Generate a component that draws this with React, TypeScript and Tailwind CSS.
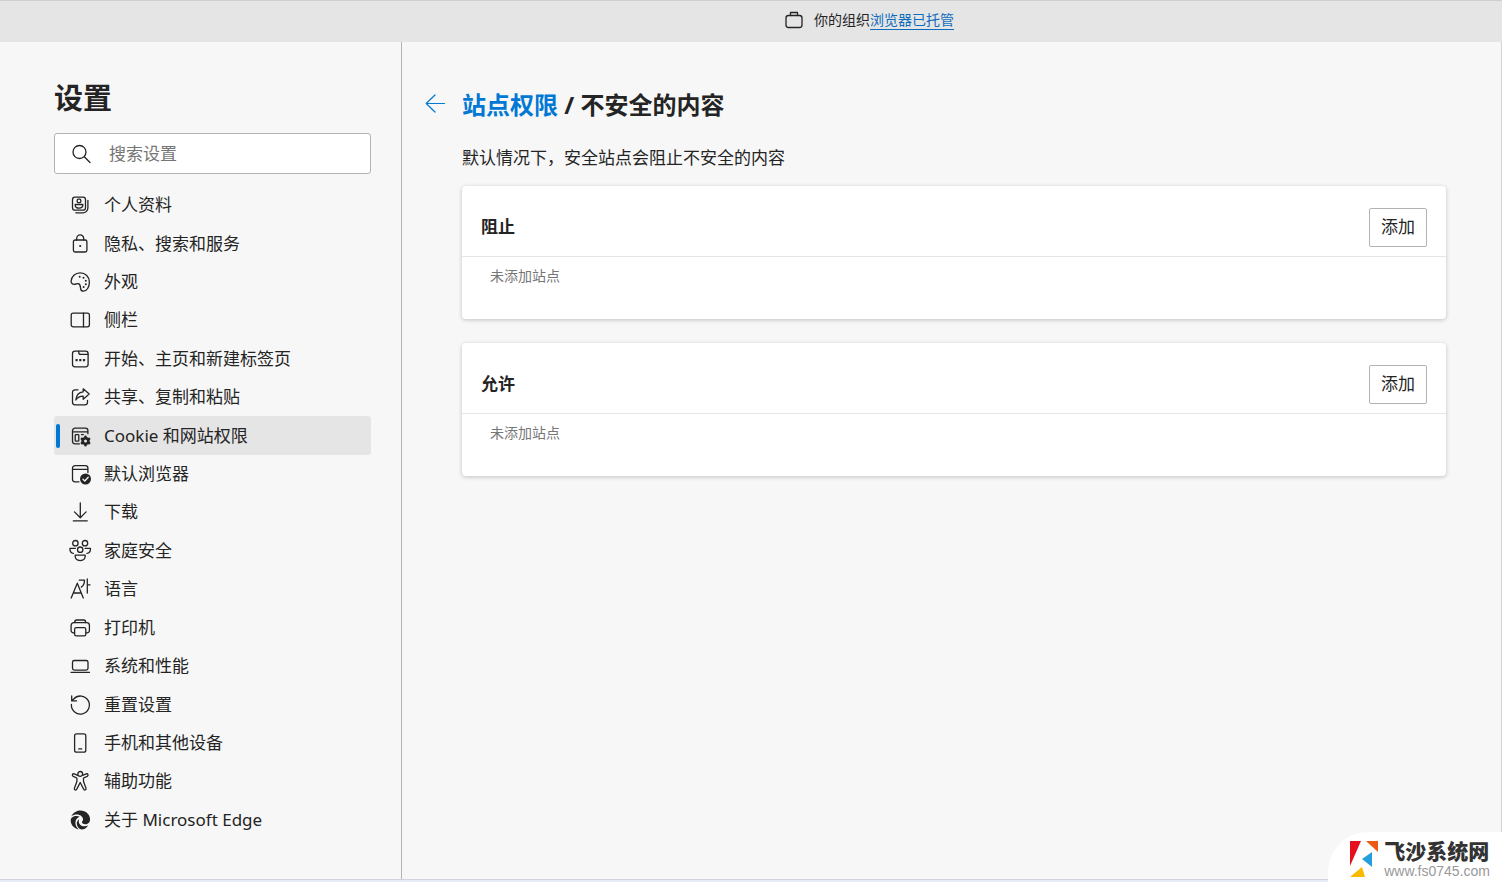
import type { ReactNode } from "react";

type IconProps = { children: ReactNode };

function Icon({ children }: IconProps) {
  return (
    <svg
      viewBox="0 0 24 24"
      className="w-6 h-6 shrink-0"
      fill="none"
      stroke="currentColor"
      strokeWidth="1.3"
      strokeLinecap="round"
      strokeLinejoin="round"
      aria-hidden="true"
    >
      {children}
    </svg>
  );
}

const navItems: { label: string; icon: ReactNode; active?: boolean }[] = [
  {
    label: "个人资料",
    icon: (
      <>
        <rect x="4.5" y="4.2" width="13" height="13" rx="2.5" />
        <rect x="9.2" y="6.2" width="3.6" height="3.4" rx="1" />
        <path d="M7.2 11.5h7.600v.8c0 1.800-1.600 2.800-3.800 2.800s-3.800-1-3.800-2.800z" />
        <path d="M19.900 7.500v7.300a5 5 0 0 1-5 5H7.800" />
      </>
    ),
  },
  {
    label: "隐私、搜索和服务",
    icon: (
      <>
        <rect x="5.400" y="8" width="13.500" height="12" rx="1.700" />
        <path d="M8.700 8V6.400a3.500 3.500 0 0 1 7 0V8" />
        <circle cx="12.200" cy="14" r="1.100" fill="currentColor" stroke="none" />
      </>
    ),
  },
  {
    label: "外观",
    icon: (
      <>
        <path d="M3.100 11.300C3.300 6.300 7.300 2.800 12.200 2.800c5.200 0 9.200 4 9.200 9.200 0 5-2.600 9.200-5.900 9.200-2 0-2.900-1.500-3-3.300-.1-2.200-.6-3.800-2.100-4.300-1.300-.4-2.400.8-4 .8-2 0-3.400-1.200-3.300-3.100z" />
        <g fill="currentColor" stroke="none">
          <circle cx="11.700" cy="6.700" r="1" />
          <circle cx="15.500" cy="7.800" r="1" />
          <circle cx="17.800" cy="10.800" r="1" />
          <circle cx="17.800" cy="14.300" r="1" />
          <circle cx="15.600" cy="17" r="1" />
        </g>
      </>
    ),
  },
  {
    label: "侧栏",
    icon: (
      <>
        <rect x="3.200" y="5.200" width="18.200" height="13.600" rx="2" />
        <path d="M15.500 5.200v13.600" />
      </>
    ),
  },
  {
    label: "开始、主页和新建标签页",
    icon: (
      <>
        <rect x="4.500" y="4.200" width="15.600" height="15.600" rx="2.500" />
        <path d="M10.800 4.200v1.200c0 1.200.8 2 2 2h7.200" />
        <g fill="currentColor" stroke="none">
          <rect x="7.500" y="12" width="2.200" height="2.200" rx=".5" />
          <rect x="11.200" y="12" width="2.200" height="2.200" rx=".5" />
          <rect x="14.900" y="12" width="2.200" height="2.200" rx=".5" />
        </g>
      </>
    ),
  },
  {
    label: "共享、复制和粘贴",
    icon: (
      <>
        <path d="M10 4.800H7a2.500 2.500 0 0 0-2.500 2.500v10A2.500 2.500 0 0 0 7 19.800h10a2.500 2.500 0 0 0 2.500-2.500v-1.800" />
        <path d="M15.200 3.800l6 5.200-6 5.200v-3c-3.400 0-5.600 1-7.400 3.800.4-4.600 2.700-7.700 7.400-8.200z" />
      </>
    ),
  },
  {
    label: "Cookie 和网站权限",
    active: true,
    icon: (
      <>
        <path d="M11.500 19.800H7a2.500 2.500 0 0 1-2.500-2.500V6.700A2.500 2.500 0 0 1 7 4.200h10.400a2.500 2.500 0 0 1 2.500 2.500v3M4.500 7.800h15.400" />
        <rect x="7.200" y="10.600" width="3.600" height="6.600" rx=".8" />
        <path d="M13.500 10.600h1.800" />
        <circle cx="17.500" cy="17" r="2.800" strokeWidth="2.600" />
        <path
          d="M17.500 12.800v.7M17.500 20.500v.7M13.900 14.900l.6.400M20.500 18.700l.6.400M13.900 19.100l.6-.4M20.500 15.300l.6-.4"
          strokeWidth="2.600"
        />
      </>
    ),
  },
  {
    label: "默认浏览器",
    icon: (
      <>
        <path d="M11 19.800H7a2.500 2.500 0 0 1-2.500-2.500V6.200A2.500 2.500 0 0 1 7 3.700h10.400a2.500 2.500 0 0 1 2.500 2.500v4.300M4.500 7.300h15.400" />
        <circle cx="17.500" cy="17" r="5.500" fill="currentColor" stroke="none" />
        <path d="M15 17.300l1.800 1.700 3.400-3.700" stroke="#f7f7f7" />
      </>
    ),
  },
  {
    label: "下载",
    icon: <path d="M12.300 3v14.500M6.500 11.900l5.800 5.800 5.800-5.800M5.300 20.800h14" />,
  },
  {
    label: "家庭安全",
    icon: (
      <>
        <circle cx="7.400" cy="4.200" r="2.700" />
        <circle cx="17" cy="4.200" r="2.700" />
        <circle cx="12.200" cy="10.700" r="2.700" />
        <path d="M7.200 16.200h10v.9c0 2.700-2 4.500-5 4.500s-5-1.800-5-4.500z" />
        <path d="M7.300 9.400H1.900c0 3 1.100 4.700 3.500 5M17.100 9.400h5.400c0 3-1.100 4.700-3.500 5" />
      </>
    ),
  },
  {
    label: "语言",
    icon: (
      <path d="M3.200 21L9.300 6.200 15.300 21M5.300 16h7.900M11.300 3.200h5.200c0 3-1 5.300-3.200 6.900M19.300 2v14M19.500 7.800h2.500" />
    ),
  },
  {
    label: "打印机",
    icon: (
      <>
        <path d="M6.500 16.800H5.400a2.300 2.300 0 0 1-2.300-2.300V9.300C3.100 7.800 4.300 6.700 5.700 6.700h13c1.500 0 2.700 1.100 2.700 2.600v5.200a2.300 2.300 0 0 1-2.300 2.300H18" />
        <path d="M6.700 6.500c0-1.500.8-2.500 2-2.500h7c1.200 0 2 1 2 2.500" />
        <rect x="6.600" y="11.700" width="11.200" height="8.200" rx="1.600" />
      </>
    ),
  },
  {
    label: "系统和性能",
    icon: (
      <>
        <rect x="4.500" y="6.500" width="15.500" height="9.600" rx="1.800" />
        <path d="M3 18.300h18.500" />
      </>
    ),
  },
  {
    label: "重置设置",
    icon: <path d="M3.400 11.500a9 9 0 1 0 2.300-5.500L3.900 7.800M3.700 3v4.900h4.900" />,
  },
  {
    label: "手机和其他设备",
    icon: (
      <>
        <rect x="6.600" y="2.800" width="11.200" height="18.400" rx="2" />
        <path d="M10.700 17.900h3" />
      </>
    ),
  },
  {
    label: "辅助功能",
    icon: (
      <>
        <circle cx="12.200" cy="4.900" r="2.400" />
        <path d="M9.800 6.300L6.200 4.900c-1.700-.6-2.600 1.600-1 2.400l3.700 1.700v3.500l-2.500 6.700c-.6 1.800 1.700 2.600 2.400.9l3.400-6.600 3.400 6.600c.7 1.700 3 .9 2.400-.9l-2.500-6.700V9l3.700-1.700c1.600-.8.7-3-1-2.400l-3.600 1.400" />
      </>
    ),
  },
  {
    label: "关于 Microsoft Edge",
    icon: (
      <g fill="currentColor" stroke="none">
        <path d="M3.300 8.500C5 4.800 8.300 2.400 12.300 2.400c5.700 0 9.800 4.300 9.800 8.800 0 3-2.200 5-4.900 5-2 0-3.300-.9-3.300-1.900 0-.8 1.100-1.200 1.100-2.900 0-2.600-2.700-4.800-6.200-4.800-2.100 0-4 .6-5.500 1.900z" />
        <path d="M2.700 12.300c0-2.600 2.600-4.400 5.700-4.400 1.300 0 2.400.3 3.300.8-2.700.9-4.300 3.300-4.300 6.100 0 2.600 1.300 4.900 3.400 6.600-4.800-.7-8.100-4.700-8.100-9.100z" />
        <path d="M11.200 11.200c-1.500 3.300.9 7.100 5.200 7.100 1.500 0 2.700-.4 3.900-1-1.600 2.700-4.200 4.300-6.800 4.300-2.900-.7-4.700-3.400-4.700-6.100 0-1.900.9-3.500 2.400-4.300z" />
      </g>
    ),
  },
];

function TopBar() {
  return (
    <header className="flex items-center justify-center gap-2 h-[42px] pb-1 pl-[234px] bg-[#e5e5e5] border-t border-[#cfcfcf] text-[14px]">
      <Icon>
        <rect x="4" y="7.500" width="16" height="12" rx="2.500" />
        <path d="M8.500 7.500v-3h7v3" />
      </Icon>
      <p>
        你的组织
        <a href="#managed" className="text-[#0f6cbd] border-b border-[#0f6cbd]">
          浏览器已托管
        </a>
      </p>
    </header>
  );
}

function Sidebar() {
  return (
    <aside className="w-[402px] shrink-0 border-r border-[#b3b3b3] pl-[54px] pr-[30px] pt-[34px] pb-8">
      <h1 className="text-[29px] leading-[44px] font-bold">设置</h1>
      <label className="mt-[13px] flex items-center h-[41px] bg-white border border-[#b3b3b3] rounded-[3px] pl-[14px]">
        <Icon>
          <circle cx="10.500" cy="10" r="6.500" />
          <path d="M15.300 14.800l5.700 5.700" />
        </Icon>
        <input
          type="search"
          aria-label="搜索设置"
          placeholder="搜索设置"
          className="ml-4 min-w-0 flex-1 bg-transparent outline-none text-[17px] placeholder:text-[#767676]"
        />
      </label>
      <nav className="mt-3 h-[653px] grid auto-rows-fr">
        {navItems.map((item) => (
          <a
            key={item.label}
            href="#settings"
            aria-current={item.active ? "page" : undefined}
            className={
              item.active
                ? "flex items-center pl-0.5 rounded-[3px] bg-[#e5e5e5]"
                : "flex items-center pl-0.5 rounded-[3px]"
            }
          >
            <span
              className={
                item.active
                  ? "w-1 h-6 mr-2 rounded-sm bg-[#0078d4]"
                  : "w-1 h-6 mr-2"
              }
            />
            <Icon>{item.icon}</Icon>
            <span className="ml-3 text-[17px] leading-6">{item.label}</span>
          </a>
        ))}
      </nav>
    </aside>
  );
}

function SiteCard({ title }: { title: string }) {
  return (
    <section className="bg-white rounded-[4px] shadow-[0_1px_4px_rgba(0,0,0,0.22)]">
      <div className="flex items-center justify-between h-[71px] pt-3 px-[19px] border-b border-[#e5e5e5]">
        <h3 className="text-[17px] font-bold">{title}</h3>
        <button
          type="button"
          className="w-[58px] h-[39px] border border-[#b3b3b3] rounded-[2px] bg-white text-[17px]"
        >
          添加
        </button>
      </div>
      <p className="h-[62px] pt-[7px] pl-7 text-[14px] leading-6 text-[#767676]">
        未添加站点
      </p>
    </section>
  );
}

function Watermark() {
  return (
    <div className="absolute right-0 bottom-0 flex items-center h-[50px] pt-1 pl-5 pr-3 gap-1 bg-white rounded-tl-[40px]">
      <svg viewBox="0 0 32 40" className="w-8 h-10 shrink-0" aria-hidden="true">
        <path d="M2 2h11L2 27z" fill="#e60f1e" />
        <path d="M18 2h12v11z" fill="#ec5b13" />
        <path d="M24 13v15l-10-8z" fill="#259fdc" />
        <path d="M2 38l12-10 3 10z" fill="#fbb900" />
      </svg>
      <div>
        <p className="text-[21px] leading-6 font-black text-[#333333]">
          飞沙系统网
        </p>
        <p className="font-['Liberation_Sans',sans-serif] text-[14px] leading-4 text-[#999999]">
          www.fs0745.com
        </p>
      </div>
    </div>
  );
}

export default function App() {
  return (
    <div className="relative min-h-screen flex flex-col pb-0.5 bg-[#e8edf7] font-['Noto_Sans','Noto_Sans_CJK_SC',sans-serif] text-[#242424]">
      <TopBar />
      <div className="flex flex-1 bg-[#f7f7f7] border-b border-r border-[#d0d3de]">
        <Sidebar />
        <main className="flex-1 flex items-start pl-5 pr-[55px] pt-[45px]">
          <button type="button" aria-label="返回" className="mt-1 text-[#0078d4]">
            <svg
              viewBox="0 0 24 24"
              className="w-6 h-6"
              fill="none"
              stroke="currentColor"
              strokeWidth="1.2"
              strokeLinecap="round"
              strokeLinejoin="round"
            >
              <path d="M22.500 12.500H4.200M13 4L4.200 12.500 13 21" />
            </svg>
          </button>
          <div className="flex-1 ml-4">
            <h2 className="text-[24px] leading-9 font-bold">
              <a href="#permissions" className="text-[#0078d4]">
                站点权限
              </a>{" "}
              / 不安全的内容
            </h2>
            <p className="mt-[23px] text-[17px] leading-6">
              默认情况下，安全站点会阻止不安全的内容
            </p>
            <div className="mt-4 grid gap-6">
              <SiteCard title="阻止" />
              <SiteCard title="允许" />
            </div>
          </div>
        </main>
      </div>
      <Watermark />
    </div>
  );
}
